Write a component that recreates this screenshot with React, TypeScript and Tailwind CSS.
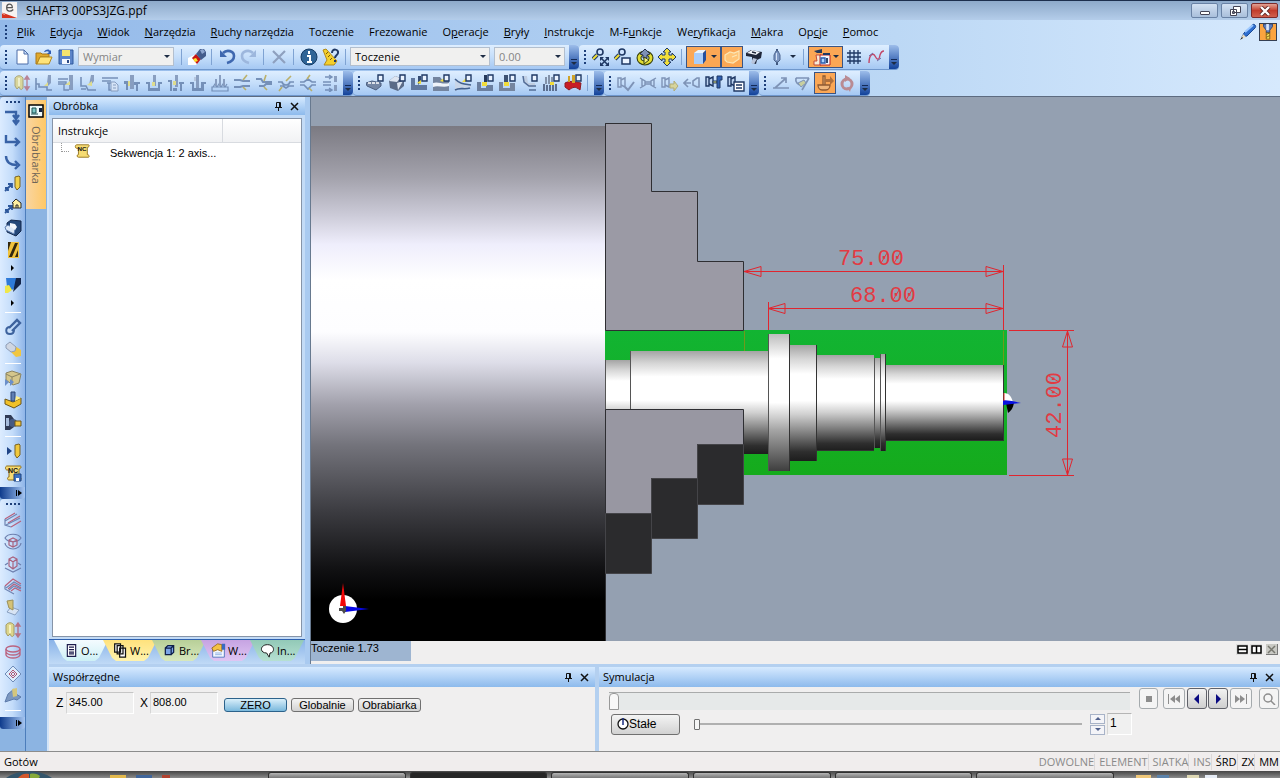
import { Fragment } from 'react';
import type { ReactNode } from 'react';

interface Tool {
  label: string;
  art: ReactNode;
}

const NAVY = '#1f3864';
const STEEL = '#6883ad';
const MUTED = '#7e93b6';
const OLIVE = '#e3dc7c';

function Icon({ children, size = 'w-[18px] h-[18px]' }: { children: ReactNode; size?: string }) {
  return (
    <svg viewBox="0 0 18 18" className={`${size} shrink-0`} fill="none" aria-hidden="true">
      {children}
    </svg>
  );
}

const fileTools: Tool[] = [
  {
    label: 'Nowy',
    art: <path d="M4 2h7l4 4v10H4zM11 2v4h4" fill="#fff" stroke="#4c6ca8" />,
  },
  {
    label: 'Otwórz',
    art: (
      <>
        <path d="M1 5h5l1 1h7v3H5l-3 7H1z" fill="#e0a92c" stroke="#a8771a" />
        <path d="M5 9h12l-3 7H2z" fill="#ffe37a" stroke="#b58a20" />
        <path d="M9 4c2-3 5-3 6-1l1-1v4h-4l2-2c-1-1-3-1-4 0z" fill="#2f5db5" />
      </>
    ),
  },
  {
    label: 'Zapisz',
    art: (
      <>
        <path d="M2 2h14v14H2z" fill="#5b84c9" stroke="#31589c" />
        <path d="M5 2h8v6H5z" fill="#f5e46e" />
        <path d="M5 11h8v5H5z" fill="#f4f8ff" />
        <path d="M10 12h2v3h-2z" fill="#2c4a86" />
      </>
    ),
  },
];

const torch = (
  <>
    <path d="M0 10l6-3 5 6-3 4H0z" fill="#fff" />
    <path d="M4 10l4-4 5 5-4 5z" fill="#c71414" />
    <path d="M5 11l3-1 2 3-3 1z" fill="#ffe12a" />
    <path d="M8 6l4-5h4l2 3v4l-5 4z" fill="#435c8c" />
    <path d="M12 2l3-1 2 3-3 2z" fill="#8ea6d0" />
  </>
);

const undo = (
  <>
    <path d="M5 5c4-4 11-2 11 3 0 4-3 6-7 7" stroke="#3f68b0" strokeWidth="2.6" />
    <path d="M2 2v7h7z" fill="#3f68b0" />
  </>
);
const redo = (
  <>
    <path d="M13 5C9 1 2 3 2 8c0 4 3 6 7 7" stroke="#9db7dd" strokeWidth="2.6" />
    <path d="M16 2v7H9z" fill="#9db7dd" />
  </>
);
const cross = <path d="M3 3l12 12M15 3L3 15" stroke="#8ea0bf" strokeWidth="2.2" />;

const info = (
  <>
    <circle cx="9" cy="9" r="8" fill="#2f6496" stroke="#143a63" />
    <path d="M9 3v3M7 8h3v6M7 14h5" stroke="#fff" strokeWidth="2" />
  </>
);

const help = (
  <>
    <path d="M1 2l3-1 11 12-3 4H2l3-5z" fill="#f4cf2b" stroke="#b08a1c" />
    <path d="M4 6l2-2M6 9l2-2M8 12l2-2" stroke="#7a5a08" />
    <path d="M10 5c0-5 7-4 6 0 0 2-3 2-3 5M13 12v2" stroke={NAVY} strokeWidth="2" />
  </>
);

const lens = (
  <>
    <path d="M5 7l-4 4" stroke={NAVY} strokeWidth="4" />
    <path d="M5 7l-4 4" stroke="#f1df35" strokeWidth="2" />
    <circle cx="8" cy="4" r="3" fill="#cfe4ff" stroke={NAVY} strokeWidth="1.6" />
  </>
);

const zoomTools: Tool[] = [
  {
    label: 'Pokaż wszystko',
    art: (
      <>
        {lens}
        <path d="M9 10l7 7M16 10l-7 7" stroke={NAVY} strokeWidth="1.5" />
        <path d="M8 9h4l-4 4zM17 9h-4l4 4zM8 18h4l-4-4zM17 18h-4l4-4z" fill={NAVY} />
      </>
    ),
  },
  {
    label: 'Powiększ okno',
    art: (
      <>
        {lens}
        <path d="M8 10h8v6H8z" fill="#eaf3ff" stroke={NAVY} strokeWidth="1.5" />
      </>
    ),
  },
  {
    label: 'Obróć widok',
    art: (
      <>
        <ellipse cx="9" cy="10" rx="6" ry="5" stroke="#37400f" strokeWidth="5" />
        <ellipse cx="9" cy="10" rx="6" ry="5" stroke="#e2dc34" strokeWidth="2.8" />
        <path d="M4 6l5-5 5 5-3 1v3H7V7z" fill="#7d90b6" stroke="#2a3354" />
        <path d="M8 9l5 3-5 4z" fill="#f4f07a" stroke="#37400f" />
      </>
    ),
  },
  {
    label: 'Przesuń widok',
    art: (
      <path
        d="M9 0l4 4h-2v3h3V5l4 4-4 4v-2h-3v3h2l-4 4-4-4h2v-3H4v2L0 9l4-4v2h3V4H5z"
        fill="#f2df3a"
        stroke={NAVY}
      />
    ),
  },
];

const shadedCube = (
  <>
    <path d="M3 5l4-3h8l-3 3z" fill="#e9f4ff" />
    <path d="M3 5h9v11H3z" fill="#a9cdfa" />
    <path d="M12 5l3-3v10l-3 4z" fill="#234f9e" />
  </>
);

const stockBlock = (
  <path d="M2 7l5-3 4 1 5-2v8l-6 4-6-1-2-2zM9 9l5-2" fill="#ffc476" stroke="#fbe6b6" strokeWidth="1.2" />
);

const clampView = (
  <>
    <path d="M1 5l5-3 11 2-1 6-4 2-1 4-4-1V9L1 8z" fill="#20273a" />
    <path d="M2 5l5-3 8 2-4 3z" fill="#f3f6fb" />
    <path d="M8 10l4 1-3 5-3-1z" fill="#b9c6dd" />
    <path d="M7 4l4 1" stroke="#20273a" strokeWidth="1.5" />
  </>
);

const toolView = (
  <>
    <path d="M8 1h2v16H8z" fill="#3f577f" />
    <path d="M6 7l2-4h2l2 4v5l-2 2H8l-2-2z" fill="#7f99c4" stroke="#4e668f" />
    <path d="M8 5h1v7H8z" fill="#d6e3f7" />
  </>
);

const machineView = (
  <>
    <path d="M1 3l8-2v4H4z" fill="#243a5c" />
    <path d="M3 7h5v10H1v-4h3z" fill="#f6ead8" stroke="#c04a3a" />
    <path d="M7 7h10v10H7z" fill="#f2f8ff" stroke="#b92424" />
    <path d="M8 10h4v5H8z" fill="#a9d3ff" stroke="#2b5caf" strokeWidth="1.4" />
    <path d="M14 10v5M10 6h7" stroke={NAVY} strokeWidth="1.8" />
  </>
);

const grid = <path d="M2 5h14M2 9h14M2 13h14M5 2v14M9 2v14M13 2v14" stroke={NAVY} strokeWidth="1.3" />;
const curve = (
  <>
    <path d="M2 15c0-8 4-11 6-7s4 5 5-1c1-3 2-4 4-4" stroke="#c24768" strokeWidth="1.4" />
    <path d="M2 8l4-3M10 13l4-3" stroke="#6d6ba4" />
  </>
);

const turningTools: Tool[] = [
  {
    label: 'Półfabrykat',
    art: (
      <>
        <path d="M2 4c2-3 6-3 8 0v10c-2 3-3 1-4-1l-2 2-2-3z" fill="#dcd58c" stroke="#a49b66" />
        <path d="M6 4v8" stroke="#f5f1c2" strokeWidth="2" />
        <path d="M14 3v12M12 5l2-3 2 3zM12 13l2 3 2-3z" stroke="#b57386" fill="#b57386" strokeWidth="1.4" />
      </>
    ),
  },
  {
    label: 'Toczenie zgrubne',
    art: (
      <>
        <path d="M1 4v12M1 10h3v3h8v3h5" stroke={STEEL} strokeWidth="1.6" />
        <path d="M13 1h3v8l-4 4v-4z" fill={MUTED} />
        <path d="M9 12l4-4v4z" fill={OLIVE} />
      </>
    ),
  },
  {
    label: 'Planowanie',
    art: (
      <>
        <path d="M1 5h10M1 8h8v2H1M7 10v6h5" stroke={STEEL} strokeWidth="1.4" />
        <path d="M12 1h4v15h-4z" fill={MUTED} />
        <path d="M8 11l5-4v4z" fill={OLIVE} />
      </>
    ),
  },
  {
    label: 'Profil',
    art: (
      <>
        <path d="M2 3v9h5l2 4h8M2 15h5" stroke={STEEL} strokeWidth="1.6" />
        <path d="M12 1h3v6l-3 4h-2z" fill={MUTED} />
        <path d="M8 11l5-4v5z" fill={OLIVE} />
      </>
    ),
  },
  {
    label: 'Wytaczanie',
    art: (
      <>
        <path d="M1 4h16M1 7h9M6 9h4M8 9v7h3" stroke={STEEL} strokeWidth="1.5" />
        <path d="M10 8h4l3 3v6h-7zM12 11h3M12 14h3" fill="#dbe7f7" stroke={MUTED} />
      </>
    ),
  },
  {
    label: 'Rowek',
    art: (
      <>
        <path d="M1 7h4v9H3v-6H1zM11 8h6v2h-2v7h-2v-6h-2z" fill={STEEL} />
        <path d="M7 1h4v14H7z" fill={MUTED} />
        <path d="M5 7h2v5H5z" fill={OLIVE} />
      </>
    ),
  },
  {
    label: 'Rowek dno',
    art: (
      <>
        <path d="M1 8h4v6h8V8h4v2h-2v7H3v-7H1z" fill={STEEL} />
        <path d="M8 1h3v11H8z" fill={MUTED} />
        <path d="M7 8h3v4H7z" fill={OLIVE} />
      </>
    ),
  },
  {
    label: 'Rowek ściana',
    art: (
      <>
        <path d="M1 6h4v11H3V8H1zM12 8h5v2h-2v7h-2v-7h-1zM6 14h4v3H6z" fill={STEEL} />
        <path d="M8 1h3v12H8z" fill={MUTED} />
        <path d="M6 7h3v4H6z" fill={OLIVE} />
      </>
    ),
  },
  {
    label: 'Przecinanie',
    art: (
      <>
        <path d="M1 8h4v6h7V8h5v2h-2v7H3v-7H1z" fill={STEEL} />
        <path d="M7 1h3v13H7z" fill={MUTED} />
        <path d="M5 3h2v4H5z" fill="#b4c3da" />
      </>
    ),
  },
  {
    label: 'Gwint',
    art: (
      <>
        <path d="M1 13h16v4H1zM2 13l2-3 2 3 2-3 2 3 2-3 2 3 2-3" stroke={STEEL} strokeWidth="1.2" />
        <path d="M5 5v7M9 1v11M13 5v7" stroke={MUTED} strokeWidth="2" />
      </>
    ),
  },
  {
    label: 'Wiercenie',
    art: (
      <>
        <path d="M1 6h6l3 1h7M1 13h6l3-1h7" stroke={STEEL} strokeWidth="2" />
        <path d="M10 6l4-5M10 13l3 3" stroke="#b8a852" strokeWidth="1.6" />
      </>
    ),
  },
  {
    label: 'Nawiercanie',
    art: (
      <>
        <path d="M1 5h5l2 3h9M4 12h5l2-2h6" stroke={STEEL} strokeWidth="2" />
        <path d="M9 7l2-6M9 13l3 3" stroke="#b8a852" strokeWidth="1.6" />
      </>
    ),
  },
  {
    label: 'Łuk górny',
    art: (
      <>
        <path d="M1 8h4c1 4 7 4 8 0h4M3 12h3l3 2 3-2h5" stroke={STEEL} strokeWidth="1.7" />
        <path d="M9 7l5-5M5 13l-3 4" stroke="#b8a852" strokeWidth="1.6" />
      </>
    ),
  },
  {
    label: 'Łuk dolny',
    art: (
      <>
        <path d="M1 8h4l4-3 4 3h4M1 11h4l4 4 4-4h4" stroke={STEEL} strokeWidth="1.7" />
        <path d="M8 5l3-4M10 14l3 3" stroke="#b8a852" strokeWidth="1.6" />
      </>
    ),
  },
  {
    label: 'Przechwyt',
    art: (
      <>
        <path d="M4 3h7M2 8h8M2 11h8M4 16h7M8 1l3 2-3 2M8 14l3 2-3 2" stroke={STEEL} strokeWidth="1.4" />
        <path d="M13 2h3v6h-3zM13 11h3v6h-3z" fill={MUTED} />
      </>
    ),
  },
];

const flag = <path d="M12 1h5v6h-5z" fill="#eaf3ff" stroke={NAVY} strokeWidth="1.4" />;

const millingTools: Tool[] = [
  {
    label: 'Frez czołowy',
    art: (
      <>
        <path d="M0 9l6-2 9 2v3l-5 4-9-4z" fill="#7486a4" stroke="#4c5f80" />
        <path d="M2 9h3M6 9h3M10 9h3" stroke="#fff" strokeWidth="1.6" />
        {flag}
      </>
    ),
  },
  {
    label: 'Frez bryły',
    art: (
      <>
        <path d="M1 7l6-5 9 3v7l-6 5-8-3z" fill="#5b6b87" />
        <path d="M1 7l6-5 5 2-3 4zM9 9l6-2-5 9z" fill="#dde5f1" />
        {flag}
      </>
    ),
  },
  {
    label: 'Cykl zgrubny',
    art: (
      <>
        <path d="M1 4h4v7h12v5H1z" fill="#60789f" />
        <path d="M8 2h3v6l-3 3z" fill="#354c73" />
        <path d="M7 9l4-3v4z" fill="#f1dc3b" />
        {flag}
      </>
    ),
  },
  {
    label: 'Cykl planowania',
    art: (
      <>
        <path d="M1 3h7l3 4h6v10H1z" fill="#73849f" />
        <path d="M1 9c5-2 10 2 16 0v3c-6 2-11-1-16 1z" fill="#eef3fa" />
        <path d="M8 7l4-3v4z" fill="#f1dc3b" />
        {flag}
      </>
    ),
  },
  {
    label: 'Cykl profilu',
    art: (
      <>
        <path d="M1 5l9 4 7 2v2c-5 4-11 1-16 4z" fill="#c9d6e8" />
        <path d="M1 5c5 5 8 5 16 6M1 16c5-3 9 0 15-2" stroke="#44628f" strokeWidth="1.6" />
        <path d="M8 8l4-4v4z" fill="#f1dc3b" />
        {flag}
      </>
    ),
  },
  {
    label: 'Cykl rowka',
    art: (
      <>
        <path d="M1 8h4v6h5v-3h7v6H1z" fill="#6b7f9f" />
        <path d="M8 1h3v7H8z" fill="#26395a" />
        <path d="M6 8h5v4H6z" fill="#f1dc3b" />
        {flag}
      </>
    ),
  },
  {
    label: 'Cykl wcięcia',
    art: (
      <>
        <path d="M1 8h4v6h7v-5h5v8H1z" fill="#75859f" />
        <path d="M6 1h4v7H6z" fill="#3e5272" />
        <path d="M6 8h5v4H6z" fill="#f1dc3b" />
        {flag}
      </>
    ),
  },
  {
    label: 'Cykl podcięcia',
    art: (
      <>
        <path d="M3 2h4l1 7h7v4H8l-4-5z" fill="#c0cee2" />
        <path d="M3 2l1 6 5 4h7M9 16h7" stroke="#536d97" strokeWidth="1.5" />
        {flag}
      </>
    ),
  },
  {
    label: 'Cykl gwintu',
    art: (
      <>
        <path d="M2 10v7M5 11v6M8 11v6M11 11v6M14 10v7" stroke="#5b6e8f" strokeWidth="2" />
        <path d="M4 3v7M7 1v9M10 3v7" stroke="#8393ab" strokeWidth="2" />
        <path d="M8 8h4v3H8z" fill="#f1dc3b" />
        {flag}
      </>
    ),
  },
  {
    label: 'Cykl odcięcia',
    art: (
      <>
        <path d="M1 9c6-3 10-1 16 0l-1 7c-5-4-7-3-11 0l-4-3z" fill="#c81c24" stroke="#8c1a22" />
        <path d="M4 2h2v6H4zM8 1h3v8H8z" fill="#d0a328" />
        {flag}
      </>
    ),
  },
];

const chuck = <path d="M1 4h3v9H1zM4 6l4-2v9l-4-2z" stroke={MUTED} strokeWidth="1.4" />;
const darkChuck = <path d="M1 3h3v9H1zM4 5l4-2v9l-4-2z" fill="#bcd2ef" stroke={NAVY} strokeWidth="1.4" />;

const chuckTools: Tool[] = [
  { label: 'Sprawdź uchwyt', art: <>{chuck}<path d="M8 13l3 3 6-8" stroke={MUTED} strokeWidth="2" /></> },
  {
    label: 'Dwa uchwyty',
    art: <path d="M1 4l5 3v4l-5 3M3 5v8M17 4l-5 3v4l5 3M15 5v8M6 8h6v2H6z" stroke={MUTED} strokeWidth="1.4" />,
  },
  {
    label: 'Wysuń uchwyt',
    art: <>{chuck}<path d="M9 10h4V7l4 5-4 5v-3H9z" fill="#d6d49c" stroke="#b0ab77" /></>,
  },
  { label: 'Cofnij uchwyt', art: <path d="M16 4v9h-2l-4-2V7l4-3zM8 9H2M5 5L1 9l4 4" stroke={MUTED} strokeWidth="1.6" /> },
  {
    label: 'Konik',
    art: (
      <>
        {darkChuck}
        <path d="M8 7h4v2H8z" fill="#e8e46c" stroke={NAVY} />
        <path d="M12 2h5v4h-2v8h-3z" fill="#2f5fb0" stroke={NAVY} />
      </>
    ),
  },
  {
    label: 'Parametry uchwytu',
    art: <>{darkChuck}<path d="M7 8h10v9H7zM9 11h6M9 14h6" fill="#fff" stroke={NAVY} strokeWidth="1.4" /></>,
  },
];

const angleIcon = <path d="M1 14h16M3 14l10-9M9 4h5v5" stroke={MUTED} strokeWidth="1.7" />;
const cornerIcon = (
  <>
    <path d="M2 4h13M15 4l-7 12M2 4c-1 4 2 7 5 7" stroke={MUTED} strokeWidth="1.7" />
    <path d="M4 9l6-3 2 3-5 4z" fill="#c8cfa0" stroke={MUTED} />
  </>
);
const measureIcon = (
  <>
    <path d="M2 11h12c0 3-2 5-4 5H6c-2 0-4-2-4-5zM7 11V2h2v9" fill="#f0b67b" stroke="#8f5a32" strokeWidth="1.3" />
    <path d="M9 5h5V2l4 5-4 4V8H9z" fill="#b0703c" />
  </>
);
const ringIcon = (
  <>
    <circle cx="9" cy="10" r="5" stroke="#b98b93" strokeWidth="3" />
    <path d="M7 1l5 3-5 4zM9 13l4 1-1 4z" fill="#b98b93" />
  </>
);

const ncScroll = (
  <>
    <path d="M3 2h13c2 0 1 3-1 3v8c2 0 3 3 1 3H5c-2 0-2-3 0-3V6H3c-2 0-2-4 0-4z" fill="#f6dc73" stroke="#93711a" />
    <text x="4" y="9" fontSize="7" fontWeight="700" fill="#111" fontFamily="Liberation Sans, sans-serif">NC</text>
  </>
);

type SideItem = Tool | 'sep' | 'arrow';

const motionTools: SideItem[] = [
  { label: 'Ruch szybki', art: <path d="M1 3h11v10M9 6l3 4 3-4M9 11l3 4 3-4" stroke="#3862a6" strokeWidth="2.4" /> },
  { label: 'Ruch roboczy', art: <path d="M2 4v7h12M11 7l4 4-4 4" stroke="#3862a6" strokeWidth="2.4" /> },
  { label: 'Ruch po łuku', art: <path d="M2 3c0 6 4 9 11 9M11 8l4 4-4 4" stroke="#3862a6" strokeWidth="2.4" /> },
  {
    label: 'Do narzędzia',
    art: (
      <>
        <path d="M1 16l7-7M4 9h4v4M1 13h3v3" stroke="#2d579b" strokeWidth="1.8" />
        <path d="M11 2l4-1 1 1v10l-3 3-2-3z" fill="#f0d149" stroke="#7a6322" />
      </>
    ),
  },
  {
    label: 'Do bazy',
    art: (
      <>
        <path d="M1 16l7-7M4 9h4v4M1 13h3v3" stroke="#2d579b" strokeWidth="1.8" />
        <path d="M8 6l4-4 5 4v5H9V6zM12 11V8h2v3" fill="#fff0a0" stroke="#282828" />
      </>
    ),
  },
  {
    label: 'Magazyn',
    art: (
      <>
        <path d="M3 4l4-3 10 1v10l-5 5-9-4z" fill="#244778" stroke="#14294d" />
        <path d="M1 8l3-2 7 4-1 5-8-4z" fill="#dbe8f8" stroke="#6281b1" />
        <path d="M6 4l5 1 2 3-2 3-5-3z" fill="#f3f6fb" />
      </>
    ),
  },
  {
    label: 'Wiertło',
    art: (
      <>
        <path d="M4 1h11v16H4z" fill="#f0c23d" />
        <path d="M4 1h3l-3 9zM11 2h3L8 16H5zM14 9v7h-3z" fill="#33280e" />
      </>
    ),
  },
  'arrow',
  {
    label: 'Nóż tokarski',
    art: (
      <>
        <path d="M2 2h14v6l-8 6-5-3z" fill="#2e7ad8" />
        <path d="M12 2h5v6l-8 8z" fill="#122448" />
        <path d="M1 10l4-1 3 5-4 3H1z" fill="#efe74a" />
      </>
    ),
  },
  'arrow',
  'sep',
  {
    label: 'Uchwyt',
    art: (
      <>
        <path d="M5 10l8-8 3 3-8 8" stroke="#3d629d" strokeWidth="2.4" />
        <path d="M6 9c-5 0-5 7 0 7 3 0 4-2 4-4" stroke="#3d629d" strokeWidth="2" />
      </>
    ),
  },
  {
    label: 'Przedmiot',
    art: (
      <>
        <path d="M5 8l6-2 6 4v6l-5 1-6-6z" fill="#f0c641" />
        <path d="M2 5l4-3 6 5-1 4-4 1-5-4z" fill="#cfd6e2" stroke="#8f9db6" />
      </>
    ),
  },
  'sep',
  {
    label: 'Symulacja szybka',
    art: (
      <>
        <path d="M2 4l6-2 9 3-2 9-6 2-7-5z" fill="#d4c68b" stroke="#8b8462" />
        <path d="M2 5l6 3v7M8 8l8-3" stroke="#8b8462" />
        <path d="M1 10l4 3-4 4zM6 10l4 3-4 4z" fill="#6b8fca" />
      </>
    ),
  },
  {
    label: 'Frezowanie kieszeni',
    art: (
      <>
        <path d="M1 8l8 3 8-4v6l-7 4-9-4z" fill="#f1c12a" stroke="#6c561a" />
        <path d="M7 1h4v9H7z" fill="#5f7fb4" stroke="#2d4674" />
        <path d="M12 5l5 2-6 3z" fill="#fff08a" />
      </>
    ),
  },
  {
    label: 'Wrzeciono',
    art: (
      <>
        <path d="M1 2h6l3 4v8l-4 3H1z" fill="#303b56" />
        <path d="M2 5h3v8H2z" fill="#a6bcdc" />
        <circle cx="9" cy="10" r="4" fill="#465a83" />
        <path d="M11 8h6v5h-6z" fill="#f2c640" stroke="#6c561a" />
      </>
    ),
  },
  'sep',
  {
    label: 'Następne narzędzie',
    art: (
      <>
        <path d="M3 5l5 4-5 4z" fill="#1f4486" />
        <path d="M11 3l4-1 1 1v10l-3 3-2-3z" fill="#f0c83c" stroke="#7a6322" />
      </>
    ),
  },
  {
    label: 'Kod NC',
    art: (
      <>
        {ncScroll}
        <path d="M10 10h7v7h-7z" fill="#3d73c2" stroke="#1f437d" />
        <path d="M12 14h3v3h-3z" fill="#fff" />
      </>
    ),
  },
];

const surfaceTools: SideItem[] = [
  {
    label: 'Linie',
    art: (
      <>
        <path d="M1 8l10-6M4 12l12-7M7 16l10-6" stroke="#b7617c" strokeWidth="1.2" />
        <path d="M1 10l12-7M2 14l14-7M1 8v6l6 2" stroke="#7085b3" strokeWidth="1.2" />
      </>
    ),
  },
  {
    label: 'Kieszeń',
    art: (
      <>
        <path d="M1 5c3-5 13-5 16 0-3 5-13 5-16 0zM1 10c0 3 4 6 8 6s8-3 8-6" stroke="#6d7fae" strokeWidth="1.2" />
        <path d="M5 7l4-2 4 2v5l-4 2-4-2zM5 7l4 2 4-2M9 9v5" stroke="#a9627e" strokeWidth="1.2" />
      </>
    ),
  },
  {
    label: 'Wyspa',
    art: (
      <>
        <path d="M1 10l3-2M17 10l-3-2M1 13l8 4 8-4" stroke="#6d7fae" strokeWidth="1.2" />
        <path d="M5 4l4-2 4 2v7l-4 3-4-3zM5 4l4 3 4-3M9 7v7" stroke="#a9627e" strokeWidth="1.2" />
      </>
    ),
  },
  {
    label: 'Powierzchnia',
    art: (
      <>
        <path d="M1 9l8-7 8 5M4 12l6-5 7 4M7 14l4-3 6 3" stroke="#b7617c" strokeWidth="1.2" />
        <path d="M2 11l8-6 7 4M5 13l5-4 7 3M1 9v3l9 5" stroke="#7085b3" strokeWidth="1.2" />
      </>
    ),
  },
  {
    label: 'Ścieżka',
    art: (
      <>
        <path d="M7 8l8 3-4 5-8-3z" fill="#d8e4f4" stroke="#8aa0c0" />
        <path d="M3 2l6-1v10l-4-2z" fill="#d5c276" stroke="#9a905b" />
      </>
    ),
  },
  turningTools[0],
  {
    label: 'Spirala',
    art: (
      <>
        <ellipse cx="9" cy="6" rx="7" ry="3" stroke="#bb6480" strokeWidth="1.4" />
        <path d="M2 6v6c2 4 12 4 14 0V6M2 9c2 4 12 4 14 0" stroke="#bb6480" strokeWidth="1.4" />
      </>
    ),
  },
  {
    label: 'Romb',
    art: (
      <>
        <path d="M9 1l8 8-8 8-8-8z" fill="#dcebfc" stroke="#6f8cb8" />
        <path d="M9 5l4 4-4 4-4-4zM9 7l2 2-2 2-2-2z" stroke="#b05874" />
      </>
    ),
  },
  {
    label: 'Bryła',
    art: (
      <>
        <path d="M1 15l3-8 6-5 2 5 5 3-4 3-3-1z" fill="#7c98c0" stroke="#5d7bab" />
        <path d="M8 2l5-1v8l-4 1z" fill="#d4c67e" />
      </>
    ),
  },
  'sep',
];

const menuItems: [string, string, string][] = [
  ['', 'P', 'lik'],
  ['', 'E', 'dycja'],
  ['', 'W', 'idok'],
  ['', 'N', 'arzędzia'],
  ['', 'R', 'uchy narzędzia'],
  ['Toczenie', '', ''],
  ['Frezowanie', '', ''],
  ['O', 'p', 'eracje'],
  ['', 'B', 'ryły'],
  ['', 'I', 'nstrukcje'],
  ['M-F', 'u', 'nkcje'],
  ['We', 'r', 'yfikacja'],
  ['', 'M', 'akra'],
  ['Op', 'c', 'je'],
  ['', 'P', 'omoc'],
];

function Grip() {
  return (
    <div className="w-[11px] flex flex-col items-center justify-center gap-[2px]">
      {[0, 1, 2, 3].map((i) => (
        <span key={i} className="w-[2px] h-[2px] bg-[#1d3f7a]" />
      ))}
    </div>
  );
}

function Separator() {
  return <div className="w-2 flex items-center pl-[3px]"><span className="w-px h-4 bg-[#7fa3d3]" /></div>;
}

function ToolButton({ tool, active, faded }: { tool: Tool; active?: boolean; faded?: boolean }) {
  return (
    <button
      aria-label={tool.label}
      className={`w-[22px] h-[22px] flex items-center justify-center ${active ? 'bg-[#fba755] border border-[#3a5585]' : ''} ${faded ? 'opacity-85' : ''}`}
    >
      <Icon>{tool.art}</Icon>
    </button>
  );
}

function Caret() {
  return <span className="border-x-[3px] border-x-transparent border-t-[3px] border-t-[#1d2c44]" />;
}

function MenuToolButton({ tool }: { tool: Tool }) {
  return (
    <button
      aria-label={tool.label}
      className="w-[35px] h-[22px] flex items-center justify-between pl-1 pr-[3px] bg-[#fba755] border border-[#3a5585]"
    >
      <Icon>{tool.art}</Icon>
      <Caret />
    </button>
  );
}

function Overflow() {
  return (
    <button
      aria-label="Więcej przycisków"
      className="w-[10px] self-stretch flex flex-col items-center justify-end gap-[2px] pb-1 rounded-r-[4px] bg-linear-to-b from-[#9dbdea] via-[#5780c4] to-[#12429a]"
    >
      <span className="w-[6px] h-px bg-[#132a58]" />
      <Caret />
    </button>
  );
}

function ToolGroup({ children }: { children: ReactNode }) {
  return (
    <div className="flex items-center h-[25px] rounded-[4px] bg-linear-to-b from-[#deeeff] via-[#c5defa] to-[#a5c8f3] border-b border-[#6f97cc]">
      <Grip />
      {children}
    </div>
  );
}

function Combo({ label, value, className, muted }: { label: string; value: string; className: string; muted?: boolean }) {
  return (
    <div className={`relative h-[19px] ${className}`}>
      <select
        aria-label={label}
        defaultValue={value}
        className={`block appearance-none w-full h-full pl-1 pr-4 text-[11px] leading-4 bg-[#f0f0ef] border border-[#b3bfce] ${muted ? 'text-[#858585]' : 'text-black'}`}
      >
        <option>{value}</option>
      </select>
      <span className="absolute right-1 top-2 pointer-events-none flex"><Caret /></span>
    </div>
  );
}

function TitleBar() {
  return (
    <header className="h-5 shrink-0 flex items-center bg-linear-to-b from-[#8eaaca] to-[#b4cdea] border-t border-[#1d2f4d]">
      <Icon size="w-[17px] h-[17px] ml-px">
        <path d="M1 0h16v17H1z" fill="#f7f3f1" />
        <path d="M1 12c4 3 9 3 12 5H1zM1 11l16 6H9z" fill="#d6331f" />
        <path d="M6 6h6c0-5-6-5-6 0 0 4 4 5 7 2" stroke="#555" strokeWidth="1.3" />
      </Icon>
      <h1 className="ml-2 text-[12px] leading-4 text-black">SHAFT3 00PS3JZG.ppf</h1>
      <div className="ml-auto flex gap-[3px] pr-[2px]">
        <button aria-label="Minimalizuj" className="w-[27px] h-[15px] rounded-[2px] border border-[#6982a5] bg-linear-to-b from-[#d3e1f2] to-[#a9bfdb] flex items-end justify-center pb-[2px]">
          <span className="w-[10px] h-[4px] bg-white border border-[#445] rounded-[1px]" />
        </button>
        <button aria-label="Przywróć" className="w-[27px] h-[15px] rounded-[2px] border border-[#6982a5] bg-linear-to-b from-[#d3e1f2] to-[#a9bfdb] flex items-center justify-center">
          <svg viewBox="0 0 12 12" className="w-3 h-3" fill="#fff" stroke="#445" aria-hidden="true">
            <path d="M4.500 1.500h7v6h-7zM1.500 4.500h6v6h-6zM3.500 6.500h2v2h-2z" />
          </svg>
        </button>
        <button aria-label="Zamknij" className="w-[27px] h-[15px] rounded-[2px] border border-[#7b2a2a] bg-linear-to-b from-[#e0a195] via-[#c23c2b] to-[#d0604e] flex items-center justify-center">
          <svg viewBox="0 0 12 10" className="w-3 h-[10px]" aria-hidden="true">
            <path d="M2 1l8 8M10 1L2 9" stroke="#5b2525" strokeWidth="4" />
            <path d="M2 1l8 8M10 1L2 9" stroke="#fff" strokeWidth="2.400" />
          </svg>
        </button>
      </div>
    </header>
  );
}

function MenuBar() {
  return (
    <nav className="h-6 shrink-0 flex items-center">
      <Grip />
      <div className="flex gap-[15px] pl-[6px] text-[11px] leading-4 text-black">
        {menuItems.map(([before, key, after]) => (
          <button key={before + key + after} className="whitespace-nowrap">
            {before}
            <span className="underline">{key}</span>
            {after}
          </button>
        ))}
      </div>
      <div className="ml-auto flex items-center gap-[2px] pr-[3px]">
        <button aria-label="Szkic">
          <Icon>
            <path d="M3 14l2-4 8-8c2-2 5 1 3 3l-8 8z" fill="#2f6fd0" stroke="#1d4b94" />
            <path d="M6 9l8-7" stroke="#9cc8ff" strokeWidth="2" />
            <path d="M2 16l2-5 3 3z" fill="#e9dcc0" />
            <path d="M1 17l2-3 1 1z" fill="#111" />
          </Icon>
        </button>
        <button aria-label="Obróbka" className="bg-[#fba43f] border border-[#353f52]">
          <Icon size="w-4 h-4">
            <path d="M4 0h10v3l-3 4v3H7V7L4 3z" fill="#5c7cba" stroke="#2c4270" />
            <path d="M7 0h3v7H7z" fill="#d9e6fb" />
            <path d="M7 10h4v7H7zM7 12l4-2M7 15l4-2" fill="#f5dc56" stroke="#7a5c14" />
          </Icon>
        </button>
      </div>
    </nav>
  );
}

function Toolbars() {
  return (
    <>
      <div className="h-[26px] shrink-0 flex items-center">
        <ToolGroup>
          {fileTools.map((t) => <ToolButton key={t.label} tool={t} />)}
          <Combo label="Wymiar" value="Wymiar" className="w-[96px] ml-px mr-1" muted />
          <Separator />
          <ToolButton tool={{ label: 'Podświetl', art: torch }} />
          <Separator />
          <ToolButton tool={{ label: 'Cofnij', art: undo }} />
          <ToolButton tool={{ label: 'Ponów', art: redo }} />
          <Separator />
          <ToolButton tool={{ label: 'Usuń', art: cross }} />
          <Separator />
          <ToolButton tool={{ label: 'Informacje', art: info }} />
          <ToolButton tool={{ label: 'Pomoc', art: help }} />
          <Separator />
          <Combo label="Tryb" value="Toczenie" className="w-[140px] mr-1" />
          <Combo label="Wartość" value="0.00" className="w-[71px] mr-1" muted />
          <Overflow />
        </ToolGroup>
        <ToolGroup>
          {zoomTools.map((t) => <ToolButton key={t.label} tool={t} />)}
          <Separator />
          <MenuToolButton tool={{ label: 'Cieniowanie', art: shadedCube }} />
          <ToolButton tool={{ label: 'Półfabrykat', art: stockBlock }} active />
          <ToolButton tool={{ label: 'Mocowanie', art: clampView }} />
          <button aria-label="Narzędzie" className="w-[35px] h-[22px] flex items-center justify-between pl-[3px] pr-1">
            <Icon>{toolView}</Icon>
            <Caret />
          </button>
          <Separator />
          <MenuToolButton tool={{ label: 'Widok maszyny', art: machineView }} />
          <ToolButton tool={{ label: 'Siatka', art: grid }} />
          <ToolButton tool={{ label: 'Krzywa', art: curve }} />
          <div className="w-[2px]" />
          <Overflow />
        </ToolGroup>
      </div>
      <div className="h-[26px] shrink-0 flex items-center">
        <ToolGroup>
          {turningTools.map((t) => <ToolButton key={t.label} tool={t} faded />)}
          <div className="w-[2px]" />
          <Overflow />
        </ToolGroup>
        <ToolGroup>
          {millingTools.map((t) => <ToolButton key={t.label} tool={t} />)}
          <Separator />
          <div className="w-[2px]" />
          <Overflow />
        </ToolGroup>
        <ToolGroup>
          {chuckTools.map((t) => <ToolButton key={t.label} tool={t} />)}
          <div className="w-[2px]" />
          <Overflow />
        </ToolGroup>
        <ToolGroup>
          <ToolButton tool={{ label: 'Kąt', art: angleIcon }} />
          <ToolButton tool={{ label: 'Naroże', art: cornerIcon }} />
          <ToolButton tool={{ label: 'Pomiar', art: measureIcon }} active />
          <ToolButton tool={{ label: 'Pierścień', art: ringIcon }} />
          <div className="w-[2px]" />
          <Overflow />
        </ToolGroup>
      </div>
    </>
  );
}

function SideGroup({ items }: { items: SideItem[] }) {
  return (
    <div className="flex flex-col items-center rounded-[4px] bg-linear-to-r from-[#dcecff] via-[#c3dcfa] to-[#8fb5e8]">
      <div className="h-[10px] flex items-center gap-[2px]">
        {[0, 1, 2, 3].map((i) => (
          <span key={i} className="w-[2px] h-[2px] bg-[#1d3f7a]" />
        ))}
      </div>
      {items.map((item, i) => (
        <Fragment key={i}>
          {item === 'sep' && (
            <div className="h-[7px] flex items-center"><span className="w-4 h-px bg-white" /></div>
          )}
          {item === 'arrow' && (
            <button aria-label="Rozwiń" className="h-[13px] flex items-center">
              <span className="border-y-[3px] border-y-transparent border-l-[3px] border-l-black" />
            </button>
          )}
          {typeof item !== 'string' && <ToolButton tool={item} />}
        </Fragment>
      ))}
      <button
        aria-label="Więcej przycisków"
        className="mt-[3px] w-full h-3 flex items-center justify-end gap-px pr-[3px] rounded-b-[3px] bg-linear-to-r from-[#0e3b8c] to-[#a6c6f1]"
      >
        <span className="w-px h-[6px] bg-black" />
        <span className="border-y-[3px] border-y-transparent border-l-[4px] border-l-black" />
      </button>
    </div>
  );
}

function PanelTitle({ children, className }: { children: string; className: string }) {
  return (
    <div className={`shrink-0 flex items-center pl-1 pr-[6px] bg-linear-to-b from-[#d6eaff] to-[#8dbaec] ${className}`}>
      <h2 className="text-[11px] leading-4 text-black">{children}</h2>
      <button aria-label="Przypnij" className="ml-auto mr-[7px]">
        <svg viewBox="0 0 9 9" className="w-[9px] h-[9px]" fill="none" stroke="#111" aria-hidden="true">
          <path d="M2.500 5.500v-5h4v5M1 5.500h7M4.500 5.500V9M5.500 1v4" />
        </svg>
      </button>
      <button aria-label="Zamknij panel">
        <svg viewBox="0 0 9 9" className="w-[9px] h-[9px]" stroke="#111" strokeWidth="1.500" aria-hidden="true">
          <path d="M1 1l7 7M8 1L1 8" />
        </svg>
      </button>
    </div>
  );
}

const tabs = [
  {
    label: 'O...',
    color: 'bg-linear-to-b from-[#f4fbff] to-[#cdf0f5]',
    art: <path d="M4 2h10v14H4zM6 5h6M6 8h6M6 11h6M6 13h6" fill="#fff" stroke="#1c1c4c" strokeWidth="1.4" />,
  },
  {
    label: 'W...',
    color: 'bg-linear-to-b from-[#ffe27c] to-[#fff3ad]',
    art: <path d="M2 1h7v10H2zM5 3h7v10H5zM8 6h7v11H8z" fill="#fff" stroke="#111" strokeWidth="1.5" />,
  },
  {
    label: 'Br...',
    color: 'bg-linear-to-b from-[#b8cf98] to-[#d7e8bd]',
    art: <path d="M4 6h7v8H4zM4 6l3-3h7v8l-3 3M11 6l3-3" fill="#7ba5e8" stroke="#0f1f4a" strokeWidth="1.5" />,
  },
  {
    label: 'W...',
    color: 'bg-linear-to-b from-[#c6a3e2] to-[#dfc6f3]',
    art: (
      <>
        <path d="M2 6h14v11H2z" fill="#f3f8ff" stroke="#4169b4" />
        <path d="M5 12h8M5 14h8" stroke="#84a7de" />
        <path d="M1 6l7-5 5 1v8l-5-2-5 2z" fill="#f5c147" stroke="#94651a" />
        <path d="M13 1h4v7h-4z" fill="#3a6ac0" />
      </>
    ),
  },
  {
    label: 'In...',
    color: 'bg-linear-to-b from-[#92c9b7] to-[#b6e0d2]',
    art: <path d="M9 2c9 0 9 10 3 10l-1 5-3-5C-1 12 0 2 9 2z" fill="#fff" stroke="#222" strokeWidth="1.2" />,
  },
];

function TreePanel() {
  return (
    <section className="w-[256px] shrink-0 flex flex-col bg-[#c3dbf6]">
      <PanelTitle className="h-[18px]">Obróbka</PanelTitle>
      <div className="flex-1 mx-[3px] mt-[3px] bg-white border border-[#8694a8] text-[11px] leading-4 text-black">
        <div className="flex h-6 items-center border-b border-[#d8dbe0] bg-linear-to-b from-white to-[#f1f2f4]">
          <span className="w-[170px] h-full flex items-center pl-[5px] border-r border-[#d8dbe0]">Instrukcje</span>
        </div>
        <button className="flex items-start h-5 pl-2 font-['Liberation_Sans',sans-serif]">
          <span className="w-2 h-[9px] border-l border-b border-dotted border-[#999]" />
          <span className="ml-[5px]"><Icon size="w-4 h-4">{ncScroll}</Icon></span>
          <span className="ml-5 mt-[2px]">Sekwencja 1: 2 axis...</span>
        </button>
      </div>
      <div role="tablist" className="h-[25px] shrink-0 mt-[2px] pl-[5px] flex items-start border-t border-[#2f62b0] bg-linear-to-b from-[#8ab4e8] to-[#c0daf6]">
        {tabs.map((tab, i) => (
          <button
            key={i}
            role="tab"
            className={`w-[54px] h-[21px] -mr-[5px] flex items-center gap-[2px] pl-[10px] text-[11px] leading-4 whitespace-nowrap [clip-path:polygon(0_0,100%_0,calc(100%-9px)_85%,calc(100%-13px)_100%,13px_100%,9px_85%)] ${tab.color}`}
          >
            <Icon size="w-[15px] h-[15px]">{tab.art}</Icon>
            {tab.label}
          </button>
        ))}
      </div>
    </section>
  );
}

// x, top, width, bottom of every diameter along the axis
const shaftSections = [
  [605, 360, 25, 444],
  [630, 351, 138, 454],
  [789, 345, 27, 461],
  [816, 355, 58, 451],
  [874, 358, 6, 448],
  [880, 354, 5, 451],
  [885, 365, 118, 440],
  [768, 334, 21, 471],
];

// The zeros are slashed, as on a plotter
function Dimension({ value, place }: { value: string; place: string }) {
  return (
    <g transform={place}>
      <text fill="#e23a43" fontFamily="Liberation Mono, monospace" fontSize="22">{value}</text>
      <path d="M43 -2l6 -10M56 -2l6 -10" stroke="#e23a43" />
    </g>
  );
}

function Viewport() {
  return (
    <svg
      viewBox="311 97 969 544"
      preserveAspectRatio="xMinYMin slice"
      className="flex-1 min-h-0 w-full bg-[#94a0b1]"
      role="img"
      aria-label="Podgląd obróbki"
    >
      <defs>
        <linearGradient id="body" x1="0" y1="0" x2="0" y2="1">
          <stop offset="0" stopColor="#7b7a82" />
          <stop offset="0.1" stopColor="#a3a2ac" />
          <stop offset="0.17" stopColor="#cac9d6" />
          <stop offset="0.23" stopColor="#efeefc" />
          <stop offset="0.3" stopColor="#ffffff" />
          <stop offset="0.4" stopColor="#fdfdff" />
          <stop offset="0.46" stopColor="#dddde8" />
          <stop offset="0.54" stopColor="#a2a1ac" />
          <stop offset="0.62" stopColor="#73737b" />
          <stop offset="0.75" stopColor="#3b3b40" />
          <stop offset="0.86" stopColor="#111113" />
          <stop offset="0.92" stopColor="#000" />
        </linearGradient>
        <linearGradient id="shaft" x1="0" y1="0" x2="0" y2="1">
          <stop offset="0" stopColor="#a4a4a4" />
          <stop offset="0.12" stopColor="#d6d6d6" />
          <stop offset="0.25" stopColor="#fff" />
          <stop offset="0.48" stopColor="#fff" />
          <stop offset="0.6" stopColor="#cfcfcf" />
          <stop offset="0.75" stopColor="#858585" />
          <stop offset="0.92" stopColor="#2e2e2e" />
          <stop offset="1" stopColor="#1d1d1d" />
        </linearGradient>
        <linearGradient id="collar" x1="0" y1="0" x2="0" y2="1">
          <stop offset="0" stopColor="#bdbdbd" />
          <stop offset="0.18" stopColor="#fff" />
          <stop offset="0.5" stopColor="#fff" />
          <stop offset="0.7" stopColor="#a5a5a5" />
          <stop offset="1" stopColor="#3e3e3e" />
        </linearGradient>
        <linearGradient id="stock" x1="0" y1="0" x2="0" y2="1">
          <stop offset="0" stopColor="#12b432" />
          <stop offset="1" stopColor="#15ab1c" />
        </linearGradient>
      </defs>

      <rect x="311" y="126" width="294" height="515" fill="url(#body)" />
      <path d="M605.500 123v518" stroke="#2f2f33" />

      <rect x="605" y="330" width="402" height="145" fill="url(#stock)" />
      {shaftSections.map(([x, top, width, bottom]) => (
        <g key={x}>
          <rect x={x} y={top} width={width} height={bottom - top} fill={x === 768 ? 'url(#collar)' : 'url(#shaft)'} />
          <path d={`M${x + 0.5} ${top}V${bottom}`} stroke="#555" />
        </g>
      ))}
      <path d="M789.500 334v137M816.500 345v116M885.500 354v97M1003.500 365v76M885 440.500h118M816 450.500h58" stroke="#333" />

      <g stroke="#2e2e32">
        <path d="M605.500 123.500h46v68h46v70h46v69h-138z" fill="#9b9aa5" />
        <path d="M605.500 409.500h138v35h-46v34h-46v35h-46z" fill="#9897a2" />
        <path d="M605.500 513.500h46v60h-46zM651.500 478.500h46v60h-46zM697.500 444.500h46v60h-46z" fill="#2b2b2d" stroke="#444448" />
      </g>

      <g stroke="#e0262f" fill="none">
        <path d="M744 271.500h259M768.500 302v28M768 308.500h235M1003.500 265v65M1009 330.500h65M1009 475.500h65M1067.500 330v145" />
        <path d="M744 271.500l17-5v10zM1003 271.500l-17-5v10zM768 308.500l17-5v10zM1003 308.500l-17-5v10zM1067.500 331l-5 16h10zM1067.500 475l-5-16h10z" />
      </g>
      <path d="M744.500 331v20M1003.500 331v34" stroke="#6f9a1c" />
      <Dimension value="75.00" place="translate(838 265)" />
      <Dimension value="68.00" place="translate(850 302)" />
      <Dimension value="42.00" place="translate(1061 438) rotate(-90)" />

      <path d="M1004 393c5 0 8 4 9 10h-9z" fill="#fff" />
      <path d="M1006 403h8c-1 5-3 8-6 10z" fill="#000" />
      <path d="M1003 400l9 1 9 2-9 1-9 1z" fill="#0a12e0" />
      <path d="M1004 393v8" stroke="#d8302a" />

      <circle cx="343" cy="609" r="14" fill="#fff" />
      <path d="M343 583l3 23h-6z" fill="#f20808" />
      <path d="M345 606l24 3-24 3z" fill="#0707e6" />
      <path d="M339 608h4v-2h3v5l-2 3-2-3h-3z" fill="#4c4c4c" />
    </svg>
  );
}

function Workspace() {
  return (
    <section className="flex-1 min-w-0 flex flex-col border-l border-[#67798f] bg-[#f0efef]">
      <Viewport />
      <div className="h-[23px] shrink-0 flex items-start">
        <span className="w-[100px] h-5 bg-[#9eb5d1] text-[11px] leading-[14px] text-black font-['Liberation_Sans',sans-serif]">Toczenie 1.73</span>
        <div className="ml-auto pt-[3px] pr-[2px] flex gap-[2px]">
          <button aria-label="Podziel poziomo" className="w-3 h-[11px] bg-[#ddd] flex items-center justify-center">
            <svg viewBox="0 0 11 9" className="w-[11px] h-[9px]" fill="#fff" stroke="#000" strokeWidth="1.500" aria-hidden="true"><path d="M1 1h9v7H1zM1 4.500h9" /></svg>
          </button>
          <button aria-label="Podziel pionowo" className="w-3 h-[11px] bg-[#ddd] flex items-center justify-center">
            <svg viewBox="0 0 11 9" className="w-[11px] h-[9px]" fill="#fff" stroke="#000" strokeWidth="1.500" aria-hidden="true"><path d="M1 1h9v7H1zM5.500 1v7" /></svg>
          </button>
          <button aria-label="Zamknij widok" className="ml-[2px] w-3 h-[11px] bg-[#c9c9c4] border-r border-b border-[#777] flex items-center justify-center">
            <svg viewBox="0 0 9 9" className="w-[9px] h-[9px]" stroke="#77776f" strokeWidth="1.500" aria-hidden="true"><path d="M1 1l7 7M8 1L1 8" /></svg>
          </button>
        </div>
      </div>
    </section>
  );
}

function Coordinate({ axis, value }: { axis: string; value: string }) {
  return (
    <label className="flex items-center gap-[2px] text-[12px] leading-4">
      <span className="w-2">{axis}</span>
      <input
        defaultValue={value}
        className="w-[68px] h-[22px] px-[2px] pb-[3px] text-[11px] leading-4 bg-[#f0f0f0] border border-t-[#c5c5c5] border-l-[#d5d5d5] border-r-white border-b-white"
      />
    </label>
  );
}

const coordButton = 'w-[63px] h-[14px] rounded-[3px] border text-[11px] leading-3';

function CoordinatesPanel() {
  return (
    <section className="w-[546px] shrink-0 flex flex-col bg-[#f0efef]">
      <PanelTitle className="h-5">Współrzędne</PanelTitle>
      <div className="flex items-start pt-[5px] pl-[7px] gap-[6px] font-['Liberation_Sans',sans-serif]">
        <Coordinate axis="Z" value="345.00" />
        <Coordinate axis="X" value="808.00" />
        <div className="flex gap-1 pt-[6px]">
          <button className={`${coordButton} bg-linear-to-b from-[#d9effa] to-[#79b8dc] border-[#2c628b]`}>ZERO</button>
          <button className={`${coordButton} bg-linear-to-b from-[#f4f4f4] to-[#d2d2d2] border-[#707070]`}>Globalnie</button>
          <button className={`${coordButton} bg-linear-to-b from-[#f4f4f4] to-[#d2d2d2] border-[#707070]`}>Obrabiarka</button>
        </div>
      </div>
    </section>
  );
}

function PlayerButton({ label, off, className, children }: { label: string; off?: boolean; className: string; children: ReactNode }) {
  return (
    <button
      aria-label={label}
      className={`h-[21px] rounded-[3px] border flex items-center justify-center ${
        off ? 'border-[#a5aaad] bg-[#f4f4f4] text-[#8d8d8d]' : 'border-[#60626a] bg-linear-to-b from-[#f2f2f2] to-[#cfcfcf] text-[#0b0b82]'
      } ${className}`}
    >
      <svg viewBox="0 0 16 12" className="w-4 h-3 shrink-0" fill="currentColor" aria-hidden="true">{children}</svg>
    </button>
  );
}

function SimulationPanel() {
  return (
    <section className="flex-1 min-w-0 flex flex-col bg-[#f0efef]">
      <PanelTitle className="h-5">Symulacja</PanelTitle>
      <div className="flex items-start pt-px pl-[10px]">
        <input
          type="range"
          aria-label="Postęp symulacji"
          defaultValue={0}
          className="appearance-none flex-1 min-w-0 h-[18px] mt-1 bg-[#e6e9e9] border-t border-[#a9abab] [&::-webkit-slider-thumb]:appearance-none [&::-webkit-slider-thumb]:w-[10px] [&::-webkit-slider-thumb]:h-[17px] [&::-webkit-slider-thumb]:rounded-t-[4px] [&::-webkit-slider-thumb]:bg-[#f8f8f8] [&::-webkit-slider-thumb]:border [&::-webkit-slider-thumb]:border-[#999]"
        />
        <div className="w-[150px] pl-[9px] flex">
          <PlayerButton label="Stop" off className="w-[19px]"><path d="M5 3h6v6H5z" /></PlayerButton>
          <PlayerButton label="Początek" off className="w-[22px] ml-[5px]"><path d="M2 1h1v10H2zM9 2v8L4 6zM14 2v8L9 6z" /></PlayerButton>
          <PlayerButton label="Wstecz" className="w-5 ml-[2px]"><path d="M10 1v10L5 6z" /></PlayerButton>
          <PlayerButton label="Odtwórz" className="w-5 ml-px"><path d="M6 1v10l5-5z" /></PlayerButton>
          <PlayerButton label="Koniec" off className="w-[22px] ml-[2px]"><path d="M2 2v8l5-4zM7 2v8l5-4zM13 1h1v10h-1z" /></PlayerButton>
          <PlayerButton label="Lupa" off className="w-5 ml-[7px]">
            <path d="M11 5a4 4 0 1 1-8 0 4 4 0 0 1 8 0zM10 8l4 4" fill="none" stroke="currentColor" strokeWidth="1.5" />
          </PlayerButton>
        </div>
      </div>
      <div className="flex items-center mt-[3px] pl-3 font-['Liberation_Sans',sans-serif]">
        <button className="w-[69px] h-[21px] pl-[5px] flex items-center rounded-[3px] border border-[#707070] bg-linear-to-b from-[#f4f4f4] to-[#d2d2d2] text-[12px] leading-4">
          <svg viewBox="0 0 12 12" className="w-3 h-3" fill="none" stroke="#111" aria-hidden="true">
            <circle cx="6" cy="6" r="5" fill="#fff" strokeWidth="1.300" />
            <path d="M6 0v7" stroke="#1a2d80" strokeWidth="1.500" />
          </svg>
          Stałe
        </button>
        <input
          type="range"
          aria-label="Prędkość symulacji"
          defaultValue={0}
          className="appearance-none flex-1 min-w-0 h-[2px] ml-[14px] mr-2 bg-[#b0b0b0] [&::-webkit-slider-thumb]:appearance-none [&::-webkit-slider-thumb]:w-[6px] [&::-webkit-slider-thumb]:h-[11px] [&::-webkit-slider-thumb]:rounded-[1px] [&::-webkit-slider-thumb]:bg-[#f5f5f5] [&::-webkit-slider-thumb]:border [&::-webkit-slider-thumb]:border-[#707070]"
        />
        <div className="w-[190px] flex items-center gap-[2px]">
          <div className="flex flex-col gap-px">
            <button aria-label="Więcej" className="w-[15px] h-[10px] border border-[#a8b3c8] bg-[#f4f4f8] flex items-center justify-center">
              <span className="border-x-[3px] border-x-transparent border-b-[3px] border-b-[#50608c]" />
            </button>
            <button aria-label="Mniej" className="w-[15px] h-[10px] border border-[#a8b3c8] bg-[#f4f4f8] flex items-center justify-center">
              <span className="border-x-[3px] border-x-transparent border-t-[3px] border-t-[#50608c]" />
            </button>
          </div>
          <input
            aria-label="Krok"
            defaultValue="1"
            className="w-[25px] h-[22px] px-[2px] pb-[3px] text-[12px] leading-4 bg-[#f0f0f0] border border-t-[#b5b5b5] border-l-[#d5d5d5] border-r-white border-b-white"
          />
        </div>
      </div>
    </section>
  );
}

const statusFlags = [
  { label: 'DOWOLNE', on: false },
  { label: 'ELEMENT', on: false },
  { label: 'SIATKA', on: false },
  { label: 'INS', on: false },
  { label: 'ŚRD', on: true },
  { label: 'ZX', on: true },
  { label: 'MM', on: true },
];

function StatusBar() {
  return (
    <footer className="h-5 shrink-0 flex items-center pl-1 pr-px bg-[#f0eded] border-t border-[#8c8c8c] text-[11px] leading-4 text-black">
      Gotów
      <div className="ml-auto flex">
        {statusFlags.map((f) => (
          <span key={f.label} className={`pl-1 border-r border-[#dcd8d8] last:border-0 ${f.on ? 'text-black' : 'text-[#8a8a8a]'}`}>
            {f.label}
          </span>
        ))}
      </div>
    </footer>
  );
}

function Taskbar() {
  return (
    <div className="h-[7px] shrink-0 flex overflow-hidden bg-linear-to-b from-[#454545] to-[#8b8b8b]">
      <div className="w-[268px] flex gap-[10px]">
        <svg viewBox="0 0 46 7" className="w-[46px] h-[7px] ml-[6px]" aria-hidden="true">
          <path d="M0 7C12-2 34-2 46 7z" fill="#34556b" />
          <path d="M12 7c3-4 7-5 11-4v4z" fill="#d4582c" />
          <path d="M24 3c4-1 8 0 10 2l-1 2h-9z" fill="#86aa3a" />
        </svg>
        <span className="mt-[4px] ml-[48px] w-4 h-[3px] bg-[#e3b94d]" />
        <span className="mt-[4px] w-4 h-[3px] bg-[#41669b]" />
        <span className="mt-[4px] w-2 h-[3px] bg-[#b14330]" />
      </div>
      <div className="flex-1 flex gap-1 pt-px">
        {[0, 1, 2, 3, 4, 5].map((i) => (
          <button
            key={i}
            aria-label={`Okno ${i + 1}`}
            className={`flex-1 rounded-t-[3px] border border-b-0 border-[#303030] ${i === 1 ? 'bg-[#262626]' : 'bg-linear-to-b from-[#b5b5b5] to-[#777]'}`}
          />
        ))}
      </div>
      <div className="w-[166px] flex gap-[6px] pl-[22px] pt-1">
        <span className="w-[15px] bg-[#f0c87a]" />
        <span className="w-3 bg-[#5c83ab]" />
        <span className="w-3 ml-3 bg-[#ded8b4]" />
        <span className="w-3 bg-[#e6ecf6]" />
      </div>
    </div>
  );
}

export default function App() {
  return (
    <div className="h-screen w-full flex flex-col overflow-hidden bg-linear-to-r from-[#93b9e9] via-[#bcd8f5] via-70% to-[#d6e9fd] font-['Open_Sans','Noto_Sans',sans-serif]">
      <TitleBar />
      <MenuBar />
      <Toolbars />
      <main className="flex-1 min-h-0 flex border-t border-[#5d6b80] bg-[#8cb4e2]">
        <aside className="w-[26px] shrink-0 border-r border-[#4c7dbb]">
          <SideGroup items={motionTools} />
          <SideGroup items={surfaceTools} />
        </aside>
        <aside className="w-[23px] shrink-0 border-r-2 border-[#d2e4f8]">
          <button className="mt-[3px] w-5 h-[109px] pt-1 flex flex-col items-center gap-2 bg-linear-to-r from-[#f9d5a0] to-[#ffc865] text-[#6f6558] text-[11px] leading-4">
            <svg viewBox="0 0 16 14" className="w-4 h-[14px] shrink-0" aria-hidden="true">
              <path d="M1 1h14v12H1z" fill="#eefafa" stroke="#000" strokeWidth="1.500" />
              <path d="M4 4h4v5H4zM3 10h7" fill="#7dc7c5" stroke="#1b5153" />
              <path d="M11 4h3v4h-3z" fill="#15233f" />
            </svg>
            <span className="[writing-mode:vertical-rl]">Obrabiarka</span>
          </button>
        </aside>
        <div className="flex-1 min-w-0 flex flex-col">
          <div className="flex-1 min-h-0 flex">
            <TreePanel />
            <div className="w-[5px] shrink-0 bg-[#a9caf0]" />
            <Workspace />
          </div>
          <div className="h-[87px] shrink-0 pt-[3px] flex gap-1 bg-[#b4d0f0]">
            <CoordinatesPanel />
            <SimulationPanel />
          </div>
        </div>
      </main>
      <StatusBar />
      <Taskbar />
    </div>
  );
}
